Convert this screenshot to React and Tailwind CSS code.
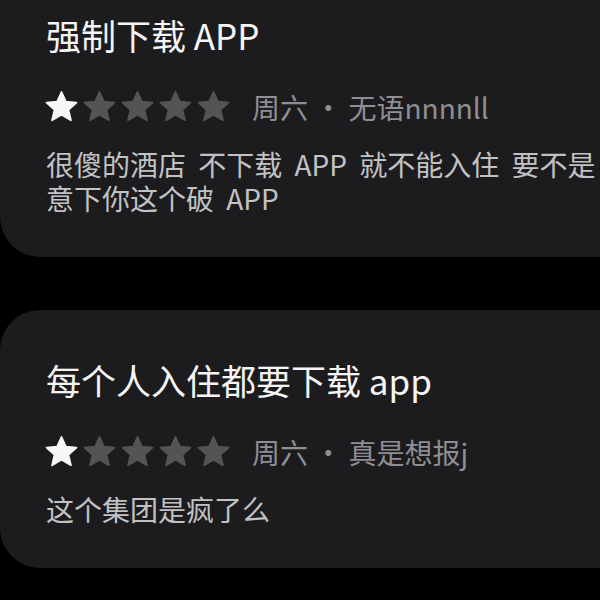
const reviews = [
  {
    title: "强制下载 APP",
    rating: 1,
    meta: "周六 · 无语nnnnll",
    body: ["很傻的酒店 不下载 APP 就不能入住 要不是", "意下你这个破 APP"],
  },
  {
    title: "每个人入住都要下载 app",
    rating: 1,
    meta: "周六 · 真是想报j",
    body: ["这个集团是疯了么"],
  },
];

function Star({ filled }) {
  const c = filled ? "#f7f7f7" : "#545457";
  return (
    <svg viewBox="0 0 24 24" className="w-[37px] h-[37px] shrink-0">
      <path
        d="M12 2.6l2.8 6.3 6.9.6-5.2 4.6 1.6 6.8-6.1-3.6-6.1 3.6 1.6-6.8-5.2-4.6 6.9-.6z"
        fill={c}
        stroke={c}
        strokeWidth="1.2"
        strokeLinejoin="round"
      />
    </svg>
  );
}

function ReviewCard({ review }) {
  return (
    <div className="bg-[#1c1c1e] rounded-l-[40px] w-[660px] pl-[46px] pt-[48px] pb-[42px]">
      <div className="text-[35px] leading-[44px] text-[#f5f5f5] whitespace-nowrap">
        {review.title}
      </div>
      <div className="flex items-center mt-[31px] h-[37px]">
        <div className="flex gap-[1px] -ml-[3px]">
          {[0, 1, 2, 3, 4].map((i) => (
            <Star key={i} filled={i < review.rating} />
          ))}
        </div>
        <span className="ml-[20px] text-[28px] text-[#8e8e93] whitespace-nowrap">
          {review.meta}
        </span>
      </div>
      <div className="mt-[22px] text-[28px] leading-[34px] text-[#c2c2c4] [word-spacing:6px]">
        {review.body.map((line, i) => (
          <div key={i} className="whitespace-nowrap">
            {line}
          </div>
        ))}
      </div>
    </div>
  );
}

export default function App() {
  return (
    <div
      className="w-[600px] h-[600px] bg-black overflow-hidden"
      style={{ fontFamily: '"Noto Sans CJK SC", "Noto Sans", sans-serif' }}
    >
      <div className="-mt-[35px] flex flex-col gap-[53px]">
        {reviews.map((r, i) => (
          <ReviewCard key={i} review={r} />
        ))}
      </div>
    </div>
  );
}
